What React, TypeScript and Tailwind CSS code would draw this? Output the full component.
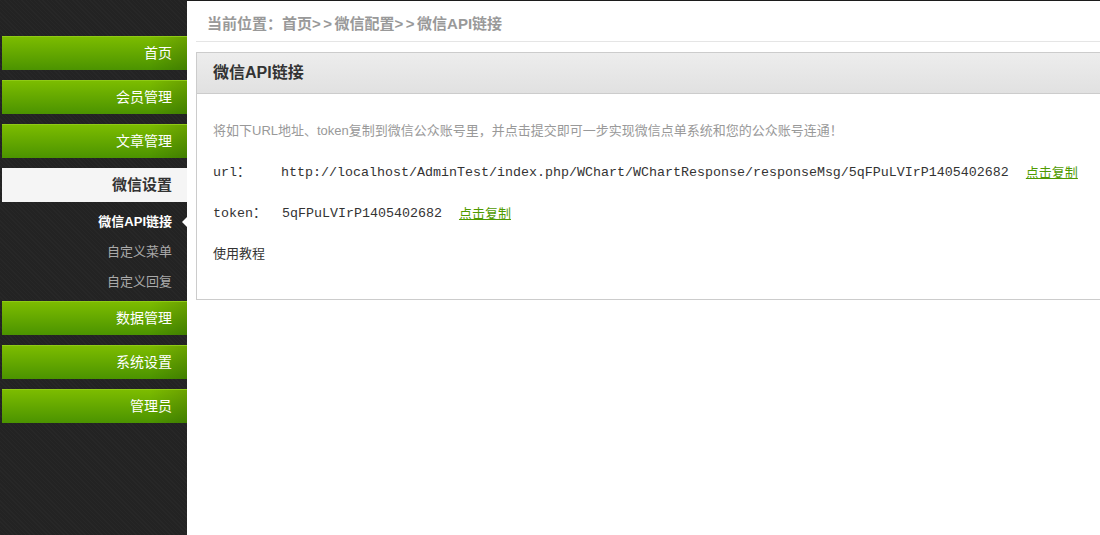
const menus = ['首页', '会员管理', '文章管理'];
const menusAfter = ['数据管理', '系统设置', '管理员'];
const subItems = ['微信API链接', '自定义菜单', '自定义回复'];

const cjk = "font-['Liberation_Sans','Noto_Sans_CJK_SC',sans-serif]";
const mono = "font-['Liberation_Mono','Noto_Sans_CJK_SC',monospace]";

function GreenItem({ label }: { label: string }) {
  return (
    <div className="ml-[2px] mb-[10px] h-[34px] flex items-center justify-end pr-[15px] border-t border-[#8fca16] bg-[linear-gradient(90deg,rgba(0,0,0,0)_80%,rgba(0,0,0,0.14)),linear-gradient(180deg,#7cbc00,#4b9300)] text-white text-[14px]">
      {label}
    </div>
  );
}

export default function App() {
  const url = 'http://localhost/AdminTest/index.php/WChart/WChartResponse/responseMsg/5qFPuLVIrP1405402682';
  const token = '5qFPuLVIrP1405402682';

  return (
    <div className={`flex min-h-[535px] ${cjk}`}>
      <aside className="w-[187px] shrink-0 bg-[#232323] bg-[repeating-linear-gradient(45deg,rgba(255,255,255,0.02)_0px,rgba(255,255,255,0.02)_1px,transparent_1px,transparent_3px)] pt-[36px]">
        {menus.map(m => <GreenItem key={m} label={m} />)}

        <div className="ml-[2px] h-[34px] flex items-center justify-end pr-[15px] bg-[#f5f5f5] text-[#333] text-[15px] font-bold">
          微信设置
        </div>
        <div className="pt-[5px] pb-[4px]">
          {subItems.map((s, i) => (
            <div
              key={s}
              className={`relative h-[30px] flex items-center justify-end pr-[15px] text-[13px] ${i === 0 ? 'text-white font-bold' : 'text-[#aaa]'}`}
            >
              {s}
              {i === 0 && (
                <span className="absolute right-0 top-[10px] w-0 h-0 border-y-[5px] border-y-transparent border-r-[5px] border-r-white" />
              )}
            </div>
          ))}
        </div>

        {menusAfter.map(m => <GreenItem key={m} label={m} />)}
      </aside>

      <main className="flex-1 bg-white border-t border-[#1c1c1c]">
        <div className="ml-[9px] h-[41px] border-b border-[#e5e5e5] pl-[11px] pt-[14px] text-[15px] leading-[18px] font-bold text-[#999]">
          当前位置：首页<span className="tracking-[2.5px]">&gt;&gt;</span>微信配置<span className="tracking-[2.5px]">&gt;&gt;</span>微信API链接
        </div>

        <div className="ml-[9px] mt-[10px] border border-r-0 border-[#ccc]">
          <div className="h-[41px] flex items-center pl-[16px] border-b border-[#ccc] bg-[linear-gradient(180deg,#ededed,#e1e1e1)] text-[16px] font-bold text-[#333]">
            微信API链接
          </div>
          <div className="pl-[16px] pt-[30px] pb-[37px] text-[13px] text-[#333]">
            <p className="leading-[14px] text-[#999]">
              将如下URL地址、token复制到微信公众账号里，并点击提交即可一步实现微信点单系统和您的公众账号连通！
            </p>
            <div className="mt-[27px] flex items-center leading-[16px] whitespace-nowrap">
              <span className={`w-[68px] text-[13.33px] ${mono}`}>url：</span>
              <span className={`text-[13.33px] ${mono}`}>{url}</span>
              <a className="ml-[17px] text-[#4f9a00] underline cursor-pointer">点击复制</a>
            </div>
            <div className="mt-[25px] flex items-center leading-[16px] whitespace-nowrap">
              <span className={`w-[69px] text-[13.33px] ${mono}`}>token：</span>
              <span className={`text-[13.33px] ${mono}`}>{token}</span>
              <a className="ml-[17px] text-[#4f9a00] underline cursor-pointer">点击复制</a>
            </div>
            <p className="mt-[24px] leading-[16px]">使用教程</p>
          </div>
        </div>
      </main>
    </div>
  );
}
